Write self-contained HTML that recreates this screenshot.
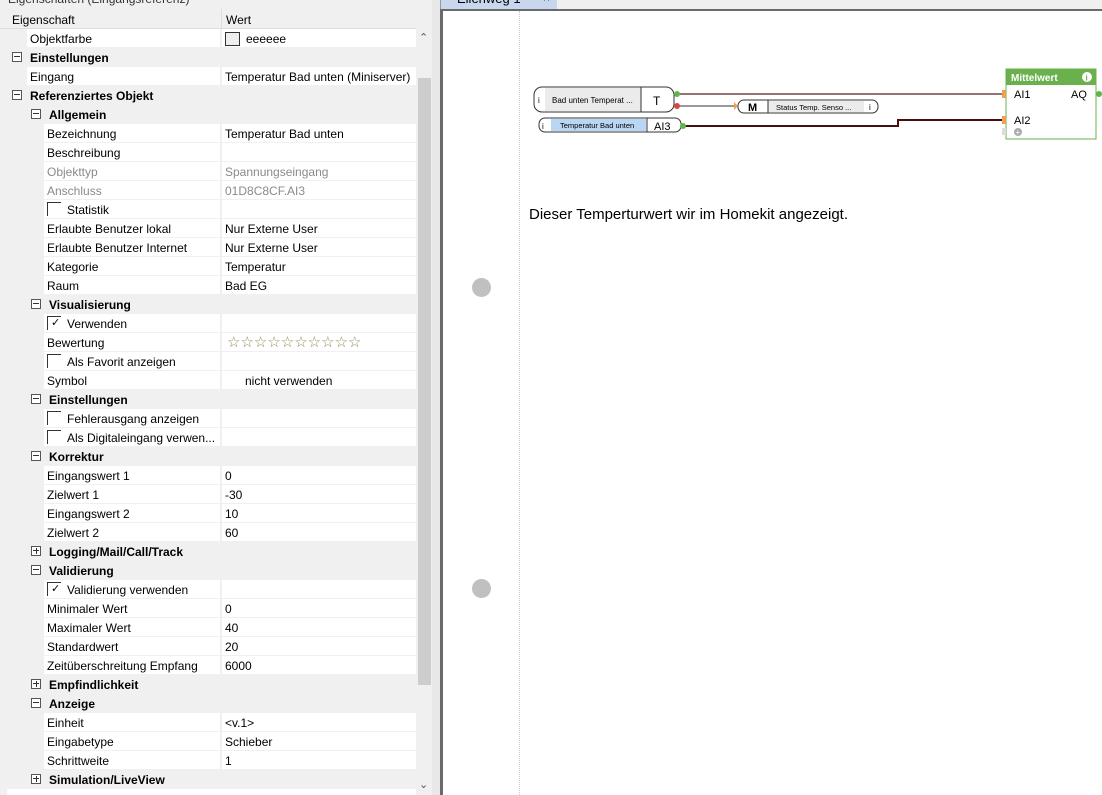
<!DOCTYPE html>
<html><head><meta charset="utf-8"><style>
*{margin:0;padding:0;box-sizing:border-box}
body{width:1102px;height:795px;overflow:hidden;background:#f0f0f0;font-family:"Liberation Sans",sans-serif;font-size:12px;color:#000;position:relative}
.p{position:absolute}
.r{position:absolute;left:0;width:416px;height:19px;background:#f0f0f0}
.r .l{position:absolute;top:0;height:18px;right:196px;background:#fff;line-height:20px;padding-left:3px;white-space:nowrap;overflow:hidden}
.r .v{position:absolute;top:0;left:222px;right:0;height:18px;background:#fff;line-height:20px;padding-left:3px;white-space:nowrap}
.r.c .l,.r.c .v{background:transparent;font-weight:bold}
.g{color:#8a8a8a}
.ic{position:absolute;top:4px;width:10px;height:10px;border:1px solid #555;background:#fff}
.ic:before{content:"";position:absolute;left:1px;top:3px;width:6px;height:1px;background:#333}
.ic.pl:after{content:"";position:absolute;left:3.5px;top:1px;width:1px;height:6px;background:#333}
.cb{position:absolute;top:2px;width:14px;height:14px;border-left:1px solid #333;border-top:1px solid #333}
.ck{position:absolute;left:3px;top:0px;font-size:11px;line-height:13px}
.l0 .l{left:27px}.l1 .l{left:44px}
</style></head><body>
<div class="p" style="left:0;top:0;width:440px;height:9px;background:#f0f0f0;overflow:hidden"><span style="position:absolute;left:8px;top:-8px;color:#333">Eigenschaften (Eingangsreferenz)</span></div>
<div class="p" style="left:0;top:9px;width:416px;height:20px;background:#f0f0f0;border-bottom:1px solid #ddd"><span class="p" style="left:12px;top:4px">Eigenschaft</span><span class="p" style="left:221px;top:0;width:1px;height:19px;background:#ddd"></span><span class="p" style="left:226px;top:4px">Wert</span></div>
<div class="p" style="left:416px;top:29px;width:16px;height:766px;background:#f0f0f0"></div>
<div class="p" style="left:418px;top:78px;width:13px;height:607px;background:#cdcdcd"></div>
<div class="p" style="left:419px;top:31px;color:#555;font-size:11px">&#8963;</div>
<div class="p" style="left:419px;top:778px;color:#555;font-size:11px">&#8964;</div>
<div class="p" style="left:432px;top:0;width:9px;height:795px;background:#e8e8e8;border-right:1px solid #999"></div>
<div class="p" style="left:0;top:62px;width:2px;height:8px;background:#7ab648"></div>
<div class="p" style="left:0;top:166px;width:2px;height:8px;background:#7ab648"></div>
<div class="p" style="left:0;top:252px;width:2px;height:8px;background:#7ab648"></div>

<div class="r l0" style="top:29px"><div class="l">Objektfarbe</div><div class="v"><span style="display:inline-block;width:15px;height:14px;border:1px solid #333;background:#eee;vertical-align:-3px;margin-right:6px"></span>eeeeee</div></div>
<div class="r c l0" style="top:48px"><span class="ic" style="left:12px"></span><div class="l">Einstellungen</div><div class="v"></div></div>
<div class="r l0" style="top:67px"><div class="l">Eingang</div><div class="v">Temperatur Bad unten (Miniserver)</div></div>
<div class="r c l0" style="top:86px"><span class="ic" style="left:12px"></span><div class="l">Referenziertes Objekt</div><div class="v"></div></div>
<div class="r c l1" style="top:105px"><span class="ic" style="left:31px"></span><div class="l" style="left:46px">Allgemein</div><div class="v"></div></div>
<div class="r l1" style="top:124px"><div class="l">Bezeichnung</div><div class="v">Temperatur Bad unten</div></div>
<div class="r l1" style="top:143px"><div class="l">Beschreibung</div><div class="v"></div></div>
<div class="r l1 g" style="top:162px"><div class="l">Objekttyp</div><div class="v">Spannungseingang</div></div>
<div class="r l1 g" style="top:181px"><div class="l">Anschluss</div><div class="v">01D8C8CF.AI3</div></div>
<div class="r l1" style="top:200px"><div class="l" style="padding-left:23px">Statistik</div><span class="cb" style="left:47px"></span><div class="v"></div></div>
<div class="r l1" style="top:219px"><div class="l">Erlaubte Benutzer lokal</div><div class="v">Nur Externe User</div></div>
<div class="r l1" style="top:238px"><div class="l">Erlaubte Benutzer Internet</div><div class="v">Nur Externe User</div></div>
<div class="r l1" style="top:257px"><div class="l">Kategorie</div><div class="v">Temperatur</div></div>
<div class="r l1" style="top:276px"><div class="l">Raum</div><div class="v">Bad EG</div></div>
<div class="r c l1" style="top:295px"><span class="ic" style="left:31px"></span><div class="l" style="left:46px">Visualisierung</div><div class="v"></div></div>
<div class="r l1" style="top:314px"><div class="l" style="padding-left:23px">Verwenden</div><span class="cb" style="left:47px"><span class="ck">&#10003;</span></span><div class="v"></div></div>
<div class="r l1" style="top:333px"><div class="l">Bewertung</div><div class="v" style="color:#9a8c60;font-size:15px;line-height:19px;padding-left:5px">☆☆☆☆☆☆☆☆☆☆</div></div>
<div class="r l1" style="top:352px"><div class="l" style="padding-left:23px">Als Favorit anzeigen</div><span class="cb" style="left:47px"></span><div class="v"></div></div>
<div class="r l1" style="top:371px"><div class="l">Symbol</div><div class="v" style="padding-left:23px">nicht verwenden</div></div>
<div class="r c l1" style="top:390px"><span class="ic" style="left:31px"></span><div class="l" style="left:46px">Einstellungen</div><div class="v"></div></div>
<div class="r l1" style="top:409px"><div class="l" style="padding-left:23px">Fehlerausgang anzeigen</div><span class="cb" style="left:47px"></span><div class="v"></div></div>
<div class="r l1" style="top:428px"><div class="l" style="padding-left:23px">Als Digitaleingang verwen...</div><span class="cb" style="left:47px"></span><div class="v"></div></div>
<div class="r c l1" style="top:447px"><span class="ic" style="left:31px"></span><div class="l" style="left:46px">Korrektur</div><div class="v"></div></div>
<div class="r l1" style="top:466px"><div class="l">Eingangswert 1</div><div class="v">0</div></div>
<div class="r l1" style="top:485px"><div class="l">Zielwert 1</div><div class="v">-30</div></div>
<div class="r l1" style="top:504px"><div class="l">Eingangswert 2</div><div class="v">10</div></div>
<div class="r l1" style="top:523px"><div class="l">Zielwert 2</div><div class="v">60</div></div>
<div class="r c l1" style="top:542px"><span class="ic pl" style="left:31px"></span><div class="l" style="left:46px">Logging/Mail/Call/Track</div><div class="v"></div></div>
<div class="r c l1" style="top:561px"><span class="ic" style="left:31px"></span><div class="l" style="left:46px">Validierung</div><div class="v"></div></div>
<div class="r l1" style="top:580px"><div class="l" style="padding-left:23px">Validierung verwenden</div><span class="cb" style="left:47px"><span class="ck">&#10003;</span></span><div class="v"></div></div>
<div class="r l1" style="top:599px"><div class="l">Minimaler Wert</div><div class="v">0</div></div>
<div class="r l1" style="top:618px"><div class="l">Maximaler Wert</div><div class="v">40</div></div>
<div class="r l1" style="top:637px"><div class="l">Standardwert</div><div class="v">20</div></div>
<div class="r l1" style="top:656px"><div class="l">Zeitüberschreitung Empfang</div><div class="v">6000</div></div>
<div class="r c l1" style="top:675px"><span class="ic pl" style="left:31px"></span><div class="l" style="left:46px">Empfindlichkeit</div><div class="v"></div></div>
<div class="r c l1" style="top:694px"><span class="ic" style="left:31px"></span><div class="l" style="left:46px">Anzeige</div><div class="v"></div></div>
<div class="r l1" style="top:713px"><div class="l">Einheit</div><div class="v">&lt;v.1&gt;</div></div>
<div class="r l1" style="top:732px"><div class="l">Eingabetype</div><div class="v">Schieber</div></div>
<div class="r l1" style="top:751px"><div class="l">Schrittweite</div><div class="v">1</div></div>
<div class="r c l1" style="top:770px"><span class="ic pl" style="left:31px"></span><div class="l" style="left:46px">Simulation/LiveView</div><div class="v"></div></div>
<div class="p" style="left:7px;top:789px;width:409px;height:6px;background:#fff"></div>

<div class="p" style="left:441px;top:0;width:116px;height:9px;background:#c9d7ee;overflow:hidden"><span style="position:absolute;left:16px;top:-9px;font-size:13px">Eilenweg 1</span><span style="position:absolute;left:102px;top:-9px">×</span></div>
<div class="p" style="left:440px;top:9px;width:662px;height:786px;background:#fff;border-left:3px solid #6a6a6a;border-top:2px solid #6a6a6a"></div>
<div class="p" style="left:519px;top:11px;width:0;height:784px;border-left:1px dotted #ccc"></div>
<div class="p" style="left:472px;top:278px;width:19px;height:19px;border-radius:50%;background:#c0c0c0"></div>
<div class="p" style="left:472px;top:579px;width:19px;height:19px;border-radius:50%;background:#c0c0c0"></div>
<div class="p" style="left:529px;top:206px;font-size:15px">Dieser Temperturwert wir im Homekit angezeigt.</div>

<svg class="p" style="left:0;top:0" width="1102" height="795">
<g font-family="Liberation Sans" font-size="8">
<line x1="677" y1="94" x2="1003" y2="94" stroke="#5a1e1e" stroke-width="1.2"/>
<line x1="677" y1="106" x2="737" y2="106" stroke="#333" stroke-width="1"/>
<path d="M683 126 H898 V120 H1003" fill="none" stroke="#4a0e0e" stroke-width="2"/>
<rect x="534" y="87" width="140" height="25" rx="8" fill="#fff" stroke="#333"/>
<rect x="545" y="88" width="96" height="23" fill="#ebebeb"/>
<line x1="641" y1="87" x2="641" y2="112" stroke="#333"/>
<text x="538" y="103" font-size="8">i</text>
<text x="552" y="103">Bad  unten  Temperat ...</text>
<text x="653" y="105" font-size="12">T</text>
<circle cx="677" cy="94" r="3" fill="#5cb84a"/>
<circle cx="677" cy="106" r="3" fill="#d9463c"/>
<rect x="539" y="118" width="142" height="14" rx="6" fill="#fff" stroke="#333"/>
<rect x="551" y="119" width="95" height="12" fill="#b9d6f5"/>
<line x1="647" y1="118" x2="647" y2="132" stroke="#333"/>
<text x="542" y="129">i</text>
<text x="560" y="128" font-size="7.5">Temperatur Bad unten</text>
<text x="654" y="130" font-size="11">AI3</text>
<circle cx="683" cy="126" r="3" fill="#5cb84a"/>
<path d="M734 102 l4 4 l-4 4z" fill="#f0a050"/>
<rect x="738" y="100" width="140" height="13" rx="6" fill="#fff" stroke="#333"/>
<rect x="768" y="101" width="96" height="11" fill="#ebebeb"/>
<line x1="768" y1="100" x2="768" y2="113" stroke="#333"/>
<text x="748" y="111" font-size="11" font-weight="bold">M</text>
<text x="776" y="110" font-size="7.5">Status  Temp.  Senso ...</text>
<text x="869" y="110">i</text>
<rect x="1006" y="69" width="90" height="70" fill="#fff" stroke="#6ab04c"/>
<rect x="1006" y="69" width="90" height="16" fill="#6ab04c"/>
<text x="1011" y="81" font-size="10" font-weight="bold" fill="#fff">Mittelwert</text>
<circle cx="1087" cy="77" r="5" fill="#fff"/>
<text x="1085.5" y="80.5" font-size="8" font-weight="bold" fill="#6ab04c">i</text>
<text x="1014" y="98" font-size="11">AI1</text>
<text x="1071" y="98" font-size="11">AQ</text>
<text x="1014" y="124" font-size="11">AI2</text>
<path d="M1002 90 h4 v8 h-4z M1002 116 h4 v8 h-4z" fill="#f0a050"/>
<path d="M1002 128 h4 v7 h-4z" fill="#ddd"/>
<circle cx="1018" cy="132" r="4" fill="#aaa"/>
<text x="1015.5" y="135" font-size="8" fill="#fff">+</text>
<circle cx="1099" cy="94" r="3" fill="#5cb84a"/>
</g>
</svg>
</body></html>
